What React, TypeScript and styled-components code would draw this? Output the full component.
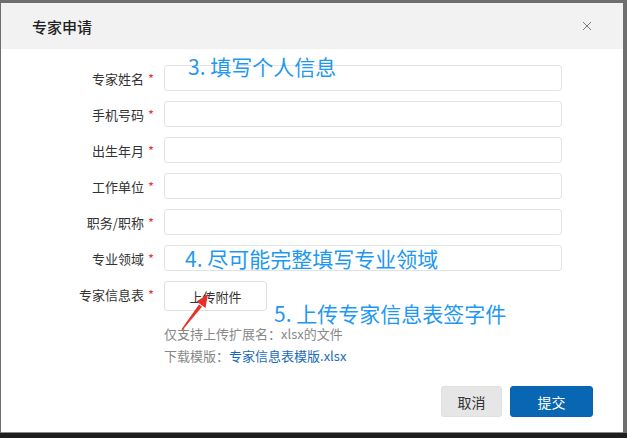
import React from "react";
import styled, { createGlobalStyle } from "styled-components";

const GlobalStyle = createGlobalStyle`
  html, body {
    margin: 0;
    padding: 0;
    background: #6e6e6e;
    font-family: "Noto Sans CJK SC", "Liberation Sans", sans-serif;
  }
`;

const Page = styled.div`
  width: 627px;
  height: 438px;
  display: flex;
  flex-direction: column;
  overflow: hidden;
`;

const Backdrop = styled.div`
  flex: 1;
  display: flex;
  padding: 3px 4px 0 1px;
  background: #6e6e6e;
`;

const BottomBar = styled.div`
  height: 5px;
  background: #1e1e1e;
`;

const Dialog = styled.div`
  position: relative;
  flex: 1;
  background: #fff;
  display: flex;
  flex-direction: column;
  border-bottom: 1px solid #8a8a8a;
`;

const Header = styled.div`
  height: 46px;
  flex-shrink: 0;
  background: #f2f2f2;
  display: flex;
  align-items: center;
  justify-content: space-between;
  padding: 0 31px 0 31px;
`;

const Title = styled.div`
  font-size: 15px;
  font-weight: 500;
  color: #222;
`;

const CloseButton = styled.button`
  border: none;
  background: none;
  padding: 0;
  width: 10px;
  height: 10px;
  display: flex;
  cursor: pointer;
`;

const Form = styled.div`
  display: grid;
  grid-template-columns: 153px 398px;
  column-gap: 10px;
  row-gap: 10px;
  padding-top: 16px;
  align-items: center;
`;

const Label = styled.label<{ top?: boolean }>`
  font-size: 13px;
  color: #333;
  text-align: right;
  white-space: nowrap;
  align-self: ${({ top }) => (top ? "start" : "center")};
  margin-top: ${({ top }) => (top ? "4px" : "0")};
`;

const Star = styled.span`
  color: #e4393c;
  margin-left: 4px;
`;

const Input = styled.input`
  box-sizing: border-box;
  height: 26px;
  width: 100%;
  border: 1px solid #e3e3e3;
  border-radius: 3px;
  outline: none;
  padding: 0 8px;
  font-size: 13px;
`;

const UploadCell = styled.div`
  display: flex;
  flex-direction: column;
  align-items: flex-start;
`;

const UploadButton = styled.button`
  box-sizing: border-box;
  width: 103px;
  height: 30px;
  background: #fff;
  border: 1px solid #e0e0e0;
  border-radius: 3px;
  font-family: inherit;
  font-size: 13px;
  color: #333;
  cursor: pointer;
`;

const Hint = styled.div<{ first?: boolean }>`
  font-size: 13px;
  line-height: 22px;
  color: #888;
  margin-top: ${({ first }) => (first ? "12px" : "0")};
`;

const Link = styled.a`
  color: #1a6cb8;
  text-decoration: none;
`;

const Footer = styled.div`
  margin-top: auto;
  display: flex;
  justify-content: flex-end;
  gap: 8px;
  padding: 0 30px 15px 0;
`;

const Button = styled.button<{ primary?: boolean }>`
  box-sizing: border-box;
  height: 31px;
  width: ${({ primary }) => (primary ? "83px" : "61px")};
  border-radius: 3px;
  border: 1px solid ${({ primary }) => (primary ? "#0a63ad" : "#e0e0e0")};
  background: ${({ primary }) => (primary ? "#0866b2" : "#e6e6e6")};
  color: ${({ primary }) => (primary ? "#fff" : "#333")};
  font-family: inherit;
  font-size: 14px;
  cursor: pointer;
`;

const Note = styled.div<{ top: number; left: number }>`
  position: absolute;
  top: ${({ top }) => top}px;
  left: ${({ left }) => left}px;
  font-size: 21px;
  line-height: 22px;
  color: #1e98f2;
  white-space: nowrap;
  pointer-events: none;
`;

const Arrow = styled.svg`
  position: absolute;
  left: 174px;
  top: 285px;
  pointer-events: none;
`;

const fields = ["专家姓名", "手机号码", "出生年月", "工作单位", "职务/职称", "专业领域"];

export default function App() {
  return (
    <>
      <GlobalStyle />
      <Page>
        <Backdrop>
          <Dialog>
            <Header>
              <Title>专家申请</Title>
              <CloseButton aria-label="close">
                <svg width="10" height="10" viewBox="0 0 10 10">
                  <path d="M1 1 L9 9 M9 1 L1 9" stroke="#777" strokeWidth="1" />
                </svg>
              </CloseButton>
            </Header>

            <Form>
              {fields.map((f) => (
                <React.Fragment key={f}>
                  <Label>
                    {f}
                    <Star>*</Star>
                  </Label>
                  <Input />
                </React.Fragment>
              ))}
              <Label top>
                专家信息表
                <Star>*</Star>
              </Label>
              <UploadCell>
                <UploadButton>上传附件</UploadButton>
                <Hint first>仅支持上传扩展名：xlsx的文件</Hint>
                <Hint>
                  下载模版：<Link href="#">专家信息表模版.xlsx</Link>
                </Hint>
              </UploadCell>
            </Form>

            <Footer>
              <Button>取消</Button>
              <Button primary>提交</Button>
            </Footer>

            <Note top={52} left={187}>3. 填写个人信息</Note>
            <Note top={244} left={184}>4. 尽可能完整填写专业领域</Note>
            <Note top={299} left={273}>5. 上传专家信息表签字件</Note>

            <Arrow width="44" height="50" viewBox="0 0 44 50">
              <polygon points="7.5,42 6.5,41.3 24,16.5 27,18.7" fill="#e8302a" />
              <polygon points="33,6 30.5,20 21.5,13.5" fill="#e8302a" />
            </Arrow>
          </Dialog>
        </Backdrop>
        <BottomBar />
      </Page>
    </>
  );
}
